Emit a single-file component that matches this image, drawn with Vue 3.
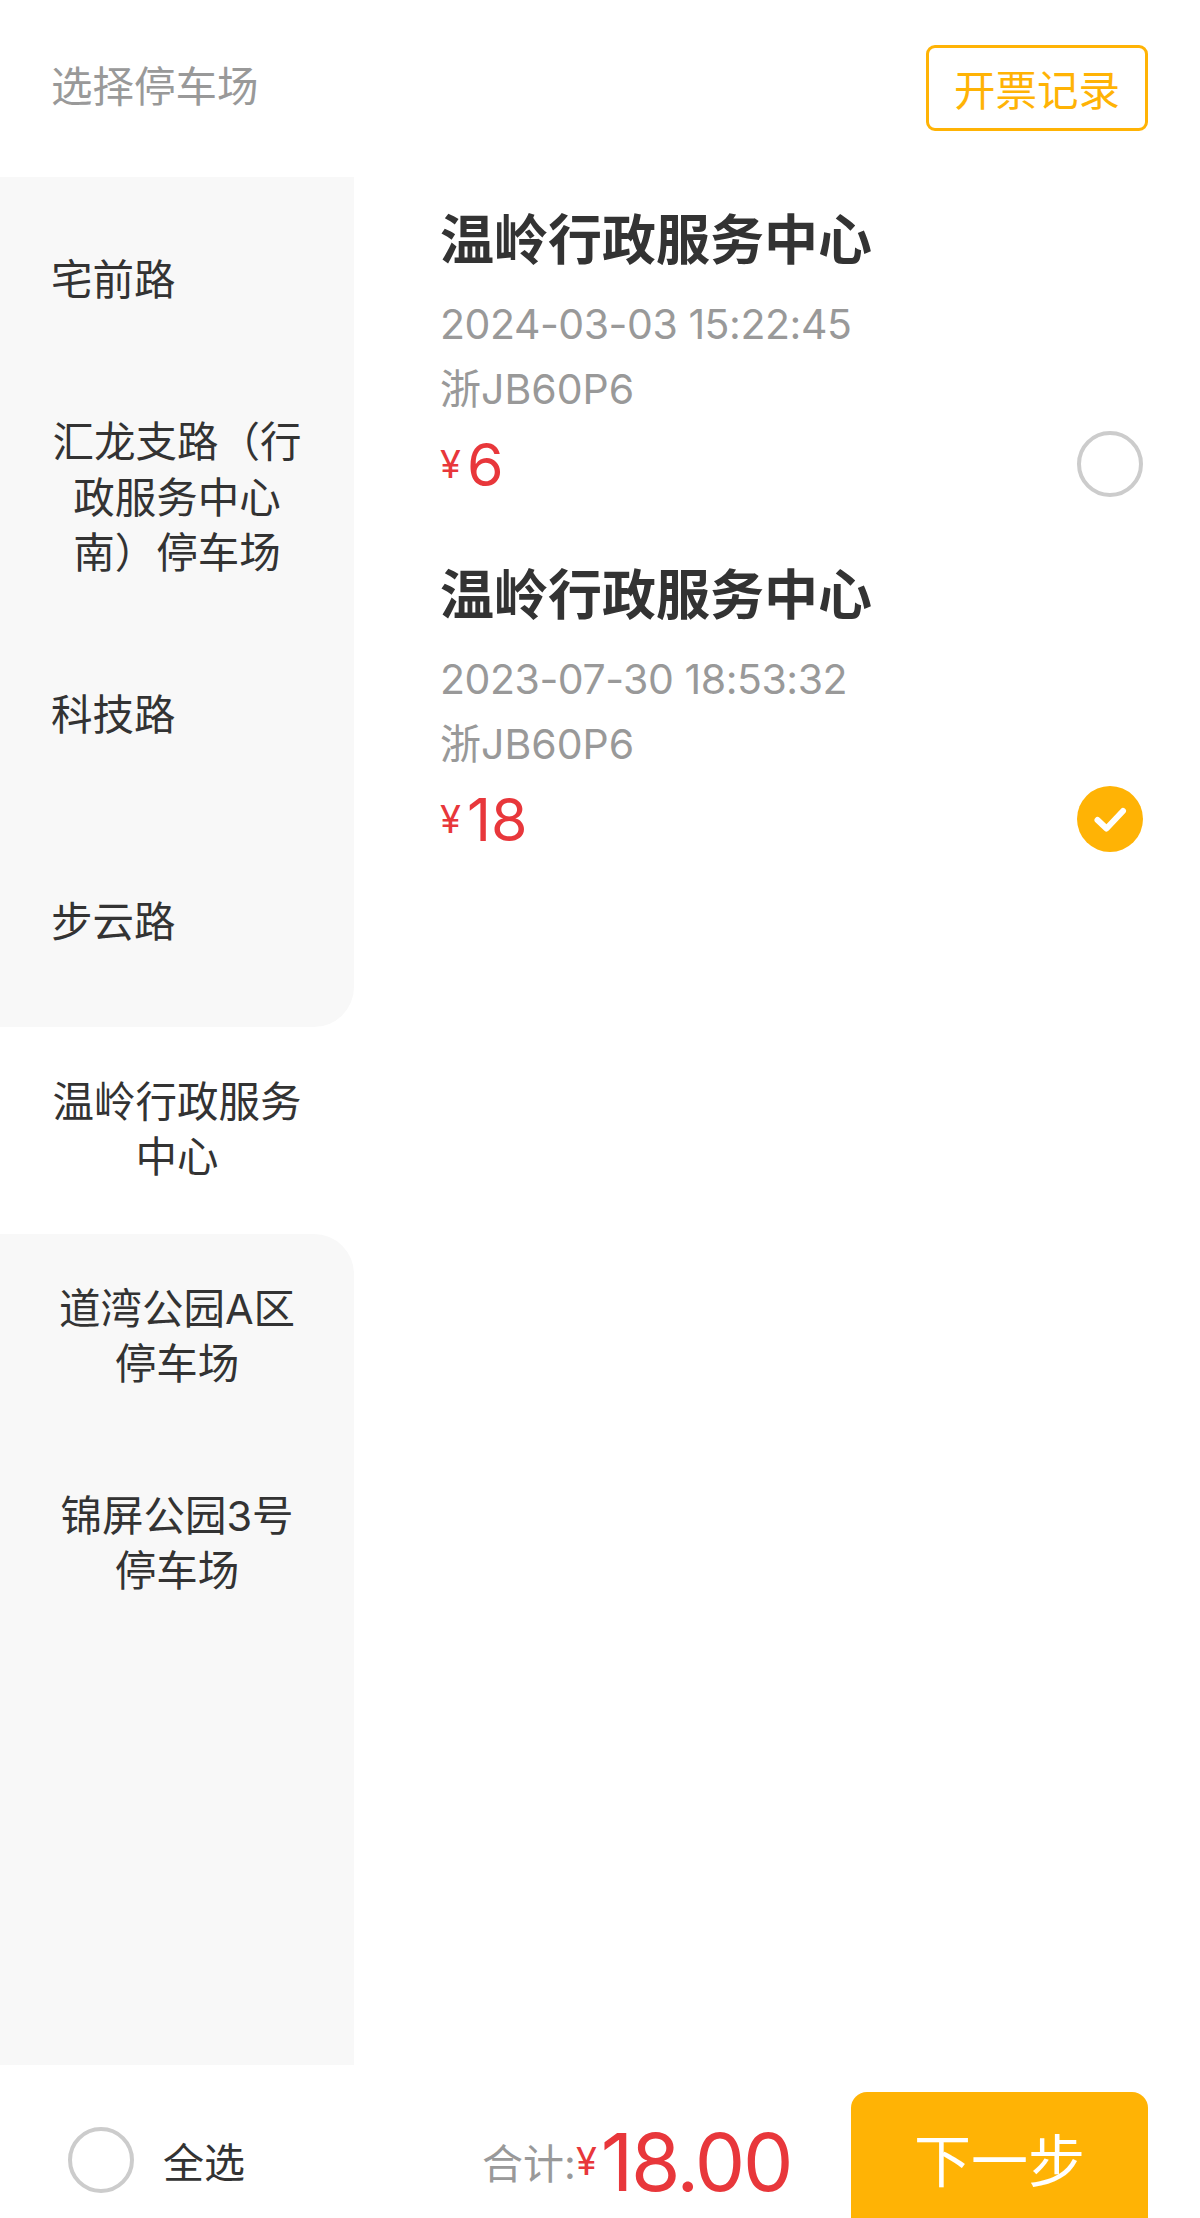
<script setup>
import { ref, computed } from 'vue'

const lots = [
  '宅前路',
  '汇龙支路（行政服务中心南）停车场',
  '科技路',
  '步云路',
  '温岭行政服务中心',
  '道湾公园A区停车场',
  '锦屏公园3号停车场'
]
const activeLot = ref(4)

const records = ref([
  { id: 1, name: '温岭行政服务中心', time: '2024-03-03 15:22:45', plate: '浙JB60P6', fee: 6, checked: false },
  { id: 2, name: '温岭行政服务中心', time: '2023-07-30 18:53:32', plate: '浙JB60P6', fee: 18, checked: true }
])

const total = computed(() =>
  records.value.filter(r => r.checked).reduce((sum, r) => sum + r.fee, 0).toFixed(2)
)

const lotClass = i => ({
  active: i === activeLot.value,
  'before-active': i === activeLot.value - 1,
  'after-active': i === activeLot.value + 1
})
</script>

<template>
  <div class="page">
    <header class="top">
      <span class="top-title">选择停车场</span>
      <button class="invoice-btn">开票记录</button>
    </header>

    <div class="body">
      <aside class="side">
        <div v-for="(lot, i) in lots" :key="lot" class="lot" :class="lotClass(i)" @click="activeLot = i">
          <span>{{ lot }}</span>
        </div>
        <div class="side-fill"></div>
      </aside>

      <main class="list">
        <section v-for="r in records" :key="r.id" class="card">
          <h3 class="name">{{ r.name }}</h3>
          <p class="meta time">{{ r.time }}</p>
          <p class="meta">{{ r.plate }}</p>
          <div class="price-row">
            <span class="price"><i>¥</i>{{ r.fee }}</span>
            <span class="radio" :class="{ on: r.checked }" @click="r.checked = !r.checked">
              <svg v-if="r.checked" viewBox="0 0 66 66" width="66" height="66">
                <path d="M20.5 34l9 8.5L46 25" fill="none" stroke="#fff" stroke-width="6" stroke-linecap="round" stroke-linejoin="round" />
              </svg>
            </span>
          </div>
        </section>
      </main>
    </div>

    <footer class="bottom">
      <div class="select-all">
        <span class="radio"></span>
        <span class="all-label">全选</span>
      </div>
      <div class="sum">
        <span class="sum-label">合计:</span>
        <span class="sum-cur">¥</span>
        <span class="sum-val">{{ total }}</span>
      </div>
      <button class="next-btn">下一步</button>
    </footer>
  </div>
</template>

<style>
html, body {
  margin: 0;
  background: #fff;
}
</style>

<style scoped>
.page {
  width: 1200px;
  height: 2218px;
  display: flex;
  flex-direction: column;
  overflow: hidden;
  background: #fff;
  font-family: Inter, "Noto Sans CJK SC", sans-serif;
  color: #333;
}

.top {
  height: 177px;
  flex: none;
  display: flex;
  justify-content: space-between;
  align-items: flex-start;
  padding: 45px 52px 0 51px;
  box-sizing: border-box;
}

.top-title {
  font-size: 41.5px;
  line-height: 84px;
  color: #999;
}

.invoice-btn {
  width: 222px;
  height: 86px;
  box-sizing: border-box;
  border: 3px solid #ffb305;
  border-radius: 9px;
  background: #fff;
  color: #ffb305;
  font: inherit;
  font-size: 41.5px;
  padding: 0;
}

.body {
  flex: 1;
  display: flex;
  min-height: 0;
}

.side {
  width: 354px;
  flex: none;
  display: flex;
  flex-direction: column;
}

.lot {
  min-height: 207px;
  box-sizing: border-box;
  padding: 31px 51px;
  display: flex;
  align-items: center;
  background: #f8f8f8;
  font-size: 41.5px;
  line-height: 55.5px;
  text-align: center;
  color: #333;
}

.lot.active {
  background: #fff;
}

.lot.before-active {
  border-bottom-right-radius: 40px;
}

.lot.after-active {
  border-top-right-radius: 40px;
}

.side-fill {
  flex: 1;
  background: #f8f8f8;
}

.list {
  flex: 1;
  padding: 28px 57px 0 86px;
}

.card {
  height: 355px;
}

.name {
  margin: 0 0 15px;
  font-size: 54px;
  line-height: 72px;
  font-weight: 700;
  color: #333;
}

.meta {
  margin: 0;
  font-size: 41px;
  line-height: 65px;
  color: #999;
}

.time {
  letter-spacing: -0.45px;
}

.price-row {
  height: 84px;
  display: flex;
  justify-content: space-between;
  align-items: center;
}

.price {
  font-size: 59px;
  color: #e8373b;
}

.price i {
  font-style: normal;
  font-size: 38px;
  margin-right: 6px;
  vertical-align: 8px;
}

.radio {
  width: 66px;
  height: 66px;
  flex: none;
  display: block;
  box-sizing: border-box;
  border: 4px solid #ccc;
  border-radius: 50%;
  background: #fff;
}

.radio.on {
  border: none;
  background: #ffb305;
}

.radio svg {
  display: block;
}

.bottom {
  height: 153px;
  flex: none;
  display: flex;
  align-items: flex-start;
  box-sizing: border-box;
  padding: 27px 52px 0 68px;
}

.select-all {
  display: flex;
  align-items: center;
  gap: 29px;
  height: 84px;
  margin-top: 26px;
}

.all-label {
  font-size: 41px;
  color: #333;
}

.sum {
  margin: 6px 60px 0 auto;
  display: flex;
  align-items: center;
  height: 126px;
}

.sum-label {
  font-size: 41px;
  color: #999;
}

.sum-cur {
  font-size: 38px;
  color: #e8373b;
  margin: 0 4px 0 0;
}

.sum-val {
  font-size: 80px;
  letter-spacing: -2.4px;
  color: #e8373b;
}

.next-btn {
  width: 297px;
  height: 126px;
  border: none;
  border-radius: 16px 16px 0 0;
  background: #ffb305;
  color: #fff;
  font: inherit;
  font-size: 57px;
  padding: 4px 0 0;
}
</style>
